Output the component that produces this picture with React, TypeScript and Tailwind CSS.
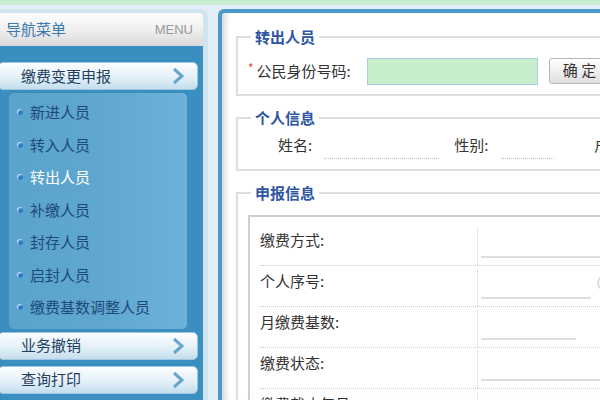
import React from "react";

const cjk = "font-[family-name:'Noto_Sans_CJK_SC','Noto_Sans',sans-serif]";

const subItems = [
  "新进人员",
  "转入人员",
  "转出人员",
  "补缴人员",
  "封存人员",
  "启封人员",
  "缴费基数调整人员",
];

const rows = [
  { label: "缴费方式:", line: "w-[140px]", ring: false },
  { label: "个人序号:", line: "w-[110px]", ring: true },
  { label: "月缴费基数:", line: "w-[95px]", ring: false },
  { label: "缴费状态:", line: "w-[140px]", ring: false },
  { label: "缴费截止年月:", line: "w-[140px]", ring: false },
];

function Chevron() {
  return (
    <svg width="12" height="18" viewBox="0 0 12 18" fill="none">
      <polyline points="2,2 10,9 2,16" stroke="#6aa6cc" strokeWidth="3" />
    </svg>
  );
}

function MenuButton({ label }: { label: string }) {
  return (
    <div className="h-[28px] ml-[-2px] mr-[5px] flex items-center justify-between pl-[22px] pr-[13px] rounded-[5px] border border-[#9fc8df] bg-gradient-to-b from-[#fbfdff] via-[#e6f2f9] to-[#c4deed] text-[15px] text-[#1f3f62]">
      <span className="whitespace-nowrap">{label}</span>
      <Chevron />
    </div>
  );
}

function Legend({ text }: { text: string }) {
  return (
    <legend className="ml-[13px] px-[4px] text-[15px] leading-[20px] font-bold text-[#2f55a4]">
      {text}
    </legend>
  );
}

export default function App() {
  return (
    <div className={`w-[600px] h-[400px] overflow-hidden flex flex-col bg-[#e3eff7] ${cjk}`}>
      <div className="h-[5px] shrink-0 bg-[#c8ecd0]" />
      <div className="flex flex-1 min-h-0 pt-[4px]">
        {/* left navigation */}
        <div className="w-[208px] shrink-0 flex flex-col border-t-[4px] border-r-[5px] border-[#d0e4f0] rounded-tr-[8px] overflow-hidden">
          <div className="h-[33px] shrink-0 flex items-center justify-between pl-[6px] pr-[10px] bg-gradient-to-b from-[#fdfdfd] via-[#f0f0f0] to-[#d9d9d9]">
            <span className="text-[15px] text-[#3a78b0]">导航菜单</span>
            <span className="text-[13px] text-[#9a9a9a] font-[family-name:'Liberation_Sans',sans-serif]">
              MENU
            </span>
          </div>
          <div className="flex-1 bg-[#3a8ec0] pt-[16px]">
            <MenuButton label="缴费变更申报" />
            <div className="ml-[9px] w-[178px] mt-[3px] pt-[3px] pb-[5px] rounded-[5px] bg-gradient-to-r from-[#5aa3cc] via-[#5fa7cf] to-[#6db2d8]">
              {subItems.map((t) => (
                <div key={t} className="h-[32.5px] flex items-center pl-[8px]">
                  <span className="w-[6px] h-[6px] rounded-full bg-[#2a7fc4] shadow-[inset_1px_1px_1px_rgba(255,255,255,0.8)]" />
                  <span
                    className={`ml-[7px] text-[15px] whitespace-nowrap ${
                      t === "转出人员" ? "text-white" : "text-[#1e4a78]"
                    }`}
                  >
                    {t}
                  </span>
                </div>
              ))}
            </div>
            <div className="mt-[3px]">
              <MenuButton label="业务撤销" />
            </div>
            <div className="mt-[6px]">
              <MenuButton label="查询打印" />
            </div>
          </div>
        </div>

        {/* main panel */}
        <div className="ml-[10px] flex-1 min-w-0 overflow-hidden border-l-4 border-t-4 border-[#4a9bc9] rounded-tl-[6px] bg-white shadow-[inset_8px_0_6px_-5px_rgba(0,0,0,0.18)]">
          <div className="w-[440px] pt-[14px] pl-[14px] text-[15px] text-[#333]">
            <fieldset className="border-2 border-[#dedede]">
              <Legend text="转出人员" />
              <div className="flex items-center pl-[10px] pt-[11px] pb-[9px] whitespace-nowrap">
                <span className="self-start mt-[4px] mr-[3px] text-[12px] leading-[12px] text-[#e0502a]">*</span>
                <span>公民身份号码:</span>
                <div className="ml-[16px] w-[171px] h-[27px] shrink-0 bg-[#c8edca] border border-[#a9cbe6]" />
                <button
                  type="button"
                  className="ml-[11px] mt-[-2px] w-[70px] h-[26px] shrink-0 pl-[13px] text-left rounded-[3px] border border-[#b5b5b5] bg-gradient-to-b from-white to-[#e0e0e0] text-[15px] text-[#333]"
                >
                  确 定
                </button>
              </div>
            </fieldset>

            <fieldset className="mt-[12px] border-2 border-[#dedede]">
              <Legend text="个人信息" />
              <div className="flex h-[28px] mt-[3px] mb-[10px] pl-[40px] whitespace-nowrap">
                <span className="self-center">姓名:</span>
                <span className="ml-[12px] w-[115px] shrink-0 border-b border-dotted border-[#bbb]" />
                <span className="self-center ml-[15px]">性别:</span>
                <span className="ml-[13px] w-[53px] shrink-0 border-b border-dotted border-[#bbb]" />
                <span className="self-center ml-[40px]">户口性质:</span>
              </div>
            </fieldset>

            <fieldset className="mt-[12px] border-2 border-[#dedede]">
              <Legend text="申报信息" />
              <div className="ml-[10px] mt-[12px] pt-[8px] border-l-2 border-t-2 border-[#cfcfcf] h-[300px]">
                {rows.map((r) => (
                  <div key={r.label} className="ml-[10px] h-[41px] flex border-b border-dotted border-[#cccccc]">
                    <span className="w-[217px] shrink-0 pt-[5px] leading-[20px]">{r.label}</span>
                    <div className="flex-1 mt-[3px] pl-[3px] pb-[7px] border-l border-dotted border-[#cccccc] flex items-end">
                      <div className={`h-[2px] shrink-0 bg-[#dedede] ${r.line}`} />
                      {r.ring && (
                        <span className="ml-[6px] mb-[8px] w-[16px] h-[16px] shrink-0 rounded-full border-2 border-[#dddddd]" />
                      )}
                    </div>
                  </div>
                ))}
              </div>
            </fieldset>
          </div>
        </div>
      </div>
    </div>
  );
}
